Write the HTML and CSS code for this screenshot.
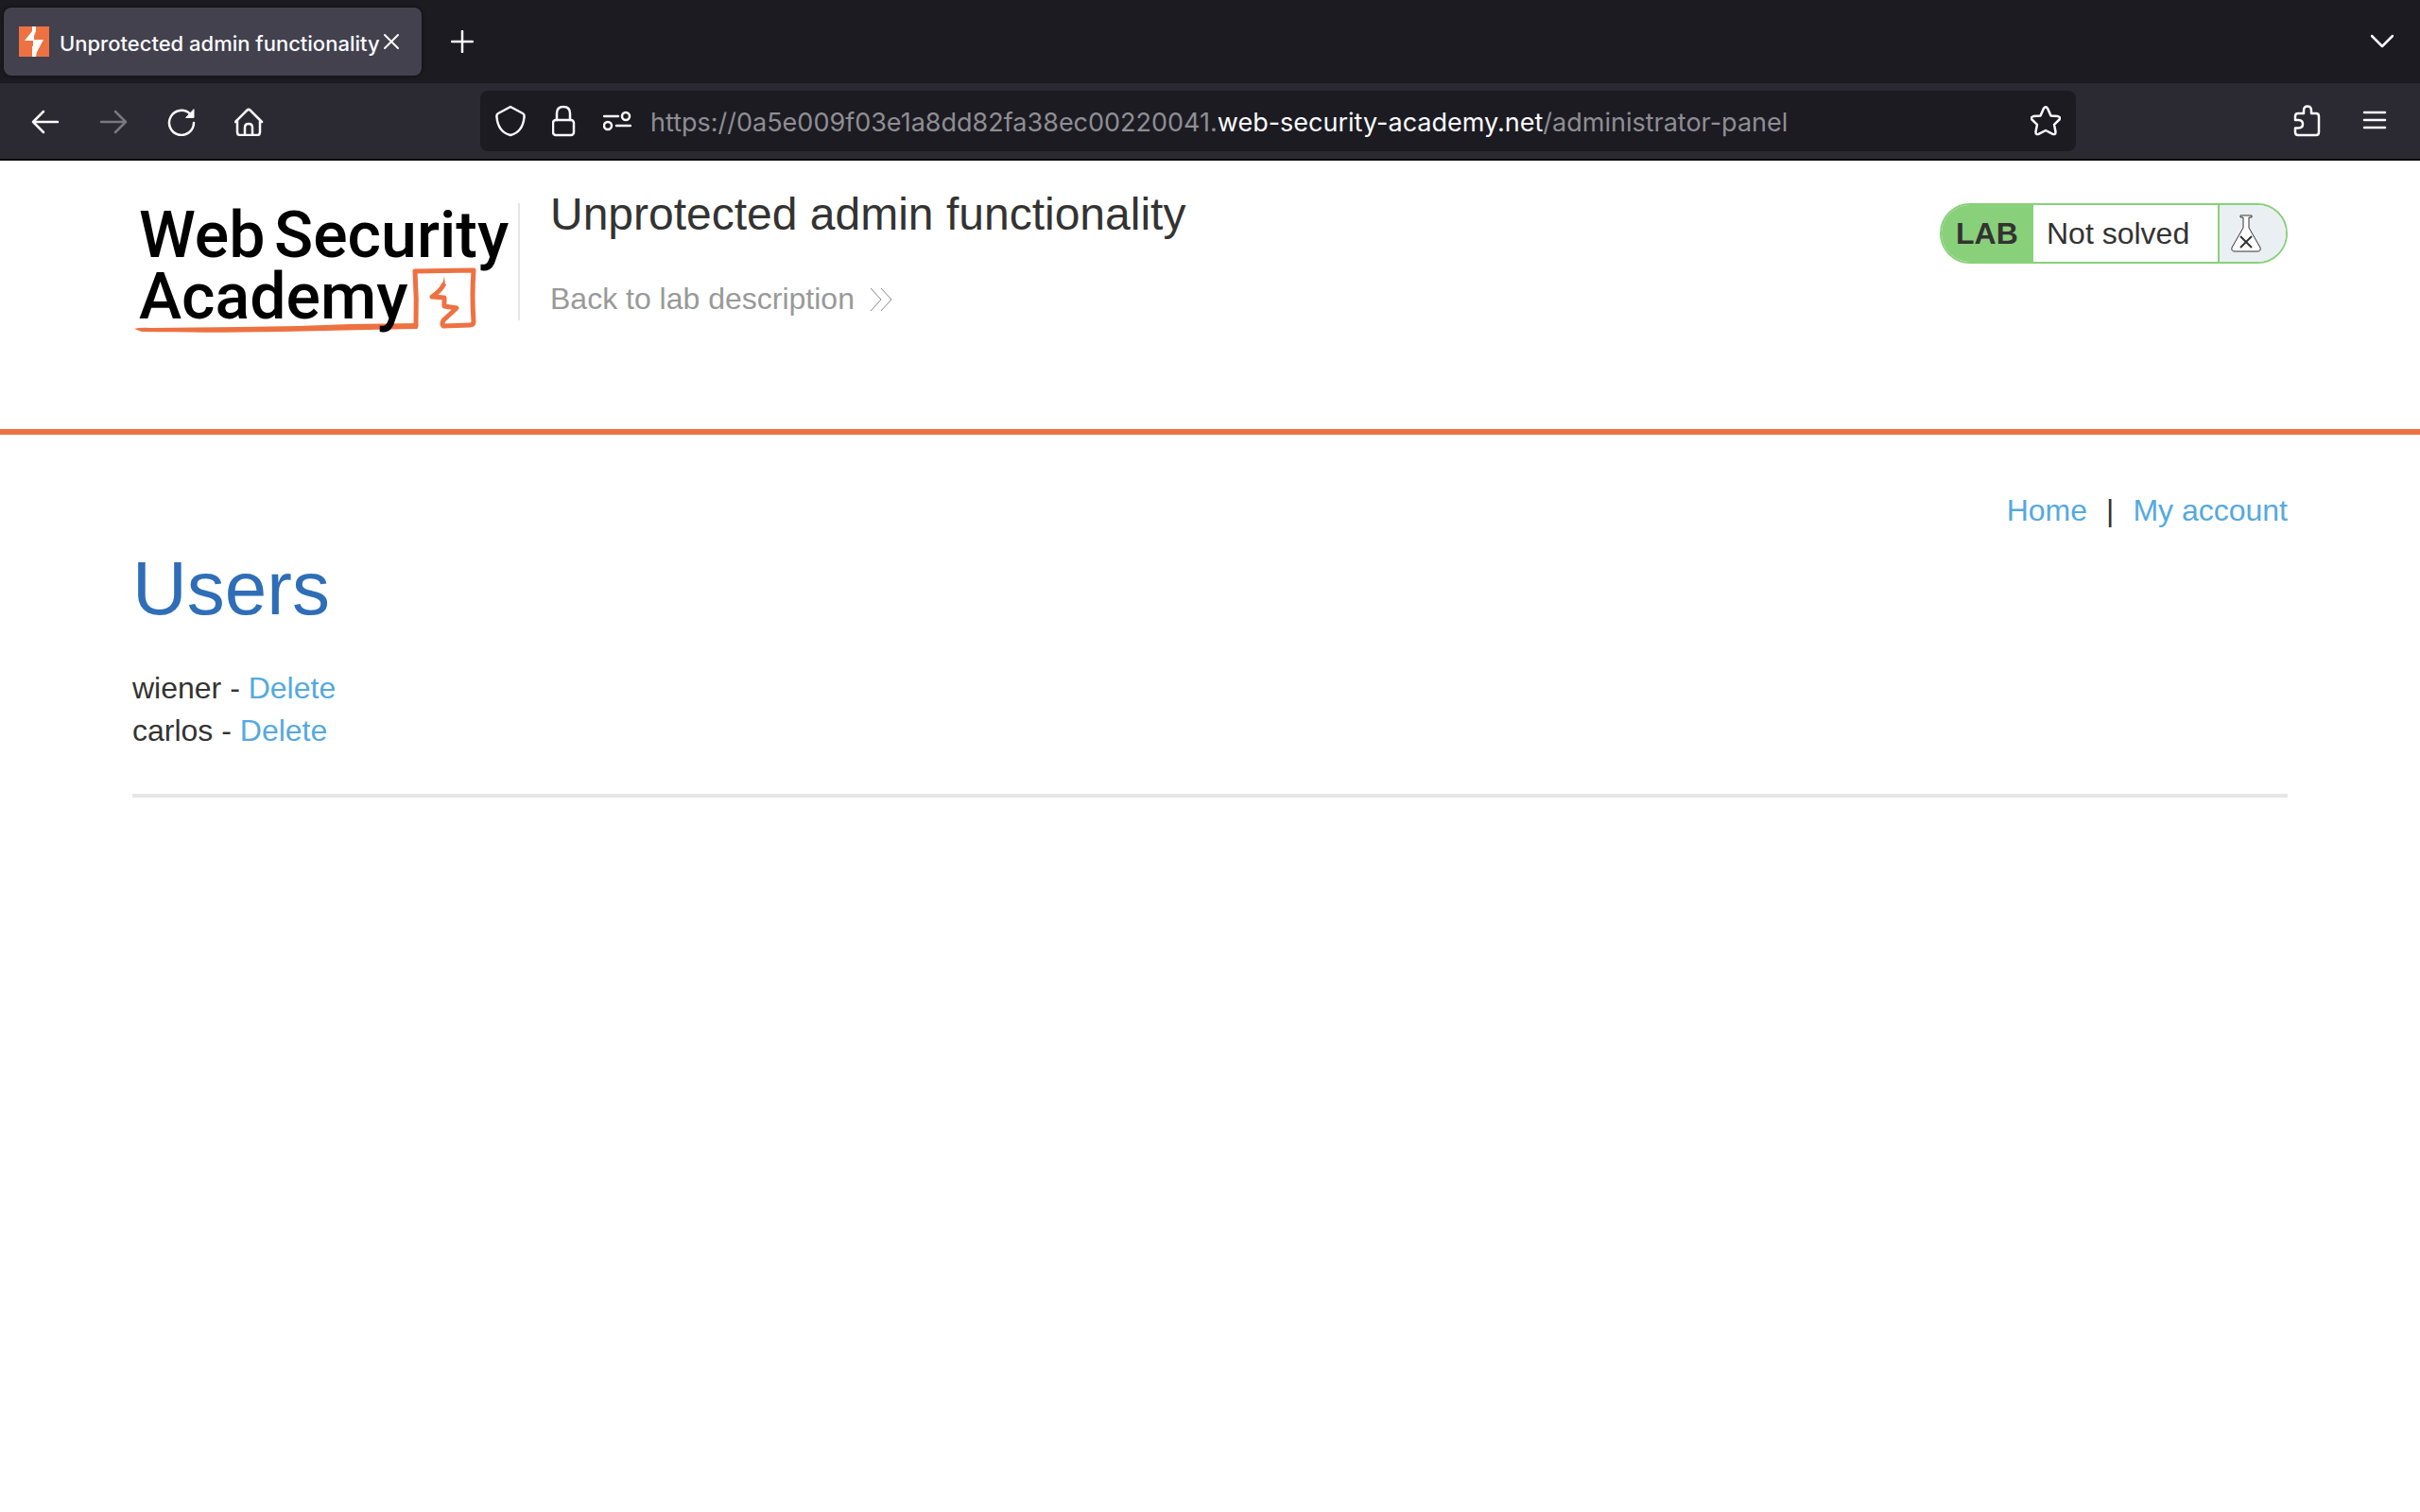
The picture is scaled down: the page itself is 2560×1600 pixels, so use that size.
FILE: index.html
```html
<!DOCTYPE html>
<html lang="en">
<head>
<meta charset="utf-8">
<title>Unprotected admin functionality</title>
<link rel="stylesheet" href="styles.css">
</head>
<body>
<div class="browser">
  <div class="tabs">
    <div class="tab">
      <svg class="favicon" viewBox="0 0 32 32" aria-hidden="true"><path fill="#ee7142" d="M0 0h32v32H0z"/><path fill="#fff" d="M14 0h4v5l-2 5v4h10l-7 13-1 5h-4V21h1v-6H6l8-10z"/></svg>
      <span class="tab-title">Unprotected admin functionality</span>
      <button class="tab-close" aria-label="Close tab"><svg width="16" height="16" viewBox="0 0 16 16"><path d="M1 1l14 14M15 1L1 15"/></svg></button>
    </div>
    <button class="icon-button" aria-label="New tab"><svg class="thick" width="24" height="24" viewBox="0 0 24 24"><path d="M12 1v22M1 12h22"/></svg></button>
    <button class="icon-button tab-list" aria-label="List all tabs"><svg class="thick" width="24" height="24" viewBox="0 0 24 24"><path d="M1 6l11 11L23 6"/></svg></button>
  </div>
  <div class="toolbar">
    <div class="tools">
      <button class="icon-button" aria-label="Back"><svg class="thick" width="32" height="32" viewBox="0 0 32 32"><path d="M29 17H3M14 6L3 17l11 11"/></svg></button>
      <button class="icon-button" aria-label="Forward" disabled><svg class="thick" width="32" height="32" viewBox="0 0 32 32"><path d="M3 17h26M18 6l11 11-11 11"/></svg></button>
      <button class="icon-button" aria-label="Reload"><svg class="thick" width="32" height="32" viewBox="0 0 32 32"><path d="M29 18A13 13 0 1 1 25 8.500"/><path class="solid" d="M29 4v8.500h-8z"/></svg></button>
      <button class="icon-button" aria-label="Home"><svg class="thick" width="32" height="32" viewBox="0 0 32 32"><path d="M1 17L13.500 4.500q1.500-1.300 3 0L29 17M3 15.500V28q0 3 3 3h18q3 0 3-3V15.500M11 31V23q0-4 4-4t4 4v8"/></svg></button>
    </div>
    <div class="address">
      <svg class="thick" width="32" height="34" viewBox="0 0 32 34"><path d="M16 2L29 9q2 1 1.500 4C29.500 24 24 30 16 32 8 30 2.500 24 1.500 13 1 10 2 9.500 3 9z"/></svg>
      <svg class="thick" width="26" height="34" viewBox="0 0 26 34"><rect x="1" y="16" width="22" height="16" rx="3"/><path d="M5 16V9q0-7 7-7t7 7v7"/></svg>
      <svg class="thick" width="30" height="22" viewBox="0 0 30 22"><path d="M1 6h15M14 16h15"/><circle cx="24" cy="6" r="4"/><circle cx="5" cy="16" r="4"/></svg>
      <div class="url" role="textbox" aria-label="Address" contenteditable="true" spellcheck="false">https://0a5e009f03e1a8dd82fa38ec00220041.<span class="domain">web-security-academy.net</span>/administrator-panel</div>
      <button class="icon-button star" aria-label="Bookmark this page"><svg class="thick" width="32" height="32" viewBox="0 0 32 32"><path d="M13.800 3q2.200-3.500 4.400 0l3.300 7.500 7.500.6q3.200.8 1.500 3.400L25 19.800l1.500 7.700q0 3.500-3 2.300L16 26l-7.500 3.800q-3 1.200-3-2.300L7 19.800 1.500 14.500Q-.2 11.900 3 11.100l7.500-.6z"/></svg></button>
    </div>
    <div class="tools">
      <button class="icon-button" aria-label="Extensions"><svg class="thick" width="32" height="34" viewBox="0 0 32 34"><path d="M4 16v-4q0-3 3-3h6V6q0-4.500 4-4.500T21 6v3h5q3 0 3 3v17q0 3-3 3H7q-3 0-3-3v-4.500h3.500q4.500 0 4.500-4.200T7.500 16z"/></svg></button>
      <button class="icon-button" aria-label="Menu"><svg class="thick" width="26" height="26" viewBox="0 0 26 26"><path d="M2 4h22M2 12h22M2 20h22"/></svg></button>
    </div>
  </div>
</div>

<header class="lab-header">
  <a class="logo" href="#" aria-label="Web Security Academy">
    <svg width="404" height="150" viewBox="0 0 404 150">
      <path fill="#ee7142" d="M2 138Q8 136 20 137C90 136 170 136 230 133L302 132v5q-1 2-3 1C190 140 110 143 10 141z"/>
      <path class="sketch" d="M300 136Q301 106 299 77L361 76Q359 104 361 130 361 134 357 134L329 135Q327 133 329 129L343 116 330 114V105L317 104Q326 98 330 90"/>
      <path fill="#ee7142" d="M330 82l1 10-7 6q5-8 6-16z"/>
      <text x="7" y="62">Web</text><text x="150" y="62">Security</text><text x="7" y="127">Academy</text>
    </svg>
  </a>
  <div class="divider"></div>
  <div class="lab-title">
    <h2>Unprotected admin functionality</h2>
    <a class="back" href="#">Back to lab description
      <svg width="24" height="26" viewBox="0 0 24 26"><path d="M1 1l11 12L1 25M12 1l11 12-11 12"/></svg>
    </a>
  </div>
  <div class="status">
    <span class="status-label">LAB</span>
    <p class="status-text">Not solved</p>
    <span class="status-icon"><svg width="32" height="40" viewBox="0 0 32 40"><path fill="#fff" stroke="#333332" d="M10 1h12v2h-3v11l12 21q1 4-3 4H4q-4 0-3-4l12-21V3h-3z"/><path fill="none" stroke="#333332" stroke-width="2" d="M10 23l12 12M22 23L10 35"/></svg></span>
  </div>
</header>

<main class="content">
  <nav class="nav"><a href="#">Home</a><span>|</span><a href="#">My account</a></nav>
  <h1>Users</h1>
  <div>wiener - <a href="#">Delete</a></div>
  <div>carlos - <a href="#">Delete</a></div>
  <hr>
</main>
</body>
</html>
```
FILE: styles.css
```css
* { box-sizing: border-box; }

body {
  margin: 0;
  background: #fff;
  color: #333332;
  font: 32px/45px "Liberation Sans", Arial, sans-serif;
}

a { color: #55a9e0; text-decoration: none; }
h1, h2, p { margin: 0; font-weight: 400; }
svg { display: block; flex: none; }

/* Browser chrome */
.browser {
  color: #fbfbfe;
  font-family: Inter, sans-serif;
  border-bottom: 2px solid #0c0c0d;
}
.browser svg { fill: none; stroke: currentColor; stroke-width: 2; stroke-linecap: round; stroke-linejoin: round; }
.browser .favicon { stroke: none; width: 32px; height: 32px; }
.browser .thick { stroke-width: 2.5; }
.browser .solid { fill: currentColor; stroke-width: 1; }

button { border: 0; padding: 0; background: none; color: inherit; font: inherit; cursor: pointer; }
.icon-button { display: flex; align-items: center; justify-content: center; width: 64px; height: 64px; }
.icon-button:disabled { color: #79787f; }

.tabs { display: flex; align-items: center; height: 88px; padding: 0 8px 0 4px; background: #1c1b22; }
.tab {
  display: flex;
  align-items: center;
  width: 442px;
  height: 72px;
  padding: 0 16px;
  border-radius: 8px;
  background: #42414d;
  box-shadow: 0 0 4px #0c0c0d;
}
.tab-title { flex: none; margin-left: 11px; padding-top: 3px; font-size: 22px; font-weight: 500; line-height: 32px; }
.tab-close { margin-left: 4px; }
.tabs > .icon-button { margin-left: 11px; }
.tabs > .tab-list { margin-left: auto; }

.toolbar { display: flex; align-items: center; height: 80px; padding: 0 16px; background: #2b2a33; }
.tools { display: flex; gap: 8px; }
.address {
  display: flex;
  align-items: center;
  flex: 0 1 1688px;
  height: 64px;
  margin: 0 auto;
  padding: 0 0 0 16px;
  gap: 28px;
  border-radius: 8px;
  background: #1c1b22;
}
.url { flex: 1; margin-left: -8px; padding-top: 3px; white-space: nowrap; font-size: 27px; line-height: 40px; color: #8f8e94; outline: 0; }
.domain { color: #fbfbfe; }

/* Lab banner */
.lab-header {
  display: flex;
  align-items: flex-start;
  padding: 29px 140px 94px;
  border-bottom: 6px solid #ee7142;
}
.logo { margin-top: 11px; }
.logo text { font: 500 68px Roboto, sans-serif; fill: #000; }
.logo .sketch { fill: none; stroke: #ee7142; stroke-width: 5; stroke-linejoin: round; }
.divider { width: 2px; height: 124px; margin: 16px 32px 0 4px; background: #e6e6e6; }
.lab-title { flex: 1; }
.lab-title h2 { font-size: 48px; line-height: 56px; }
.back { display: flex; align-items: center; gap: 16px; margin-top: 39px; color: #999; }
.back svg { fill: none; stroke: #888; }

.status {
  display: flex;
  width: 368px;
  height: 64px;
  margin-top: 16px;
  border: 2px solid #89d07a;
  border-radius: 32px;
  overflow: hidden;
  line-height: 60px;
}
.status-label { width: 97px; padding-left: 15px; background: #89d07a; font-weight: 700; }
.status-text { flex: 1; padding-left: 14px; }
.status-icon { width: 72px; padding: 10px 12px; border-left: 2px solid #89d07a; background: #eaeff3; }

/* Page body */
.content { padding: 58px 140px; }
.nav { display: flex; justify-content: flex-end; gap: 20px; }
.content h1 { margin: 14px 0 37px; font-size: 80px; line-height: 92px; color: #2f6eb7; }
.content hr { height: 4px; margin: 44px 0 0; border: 0; background: #e6e6e6; }
```
